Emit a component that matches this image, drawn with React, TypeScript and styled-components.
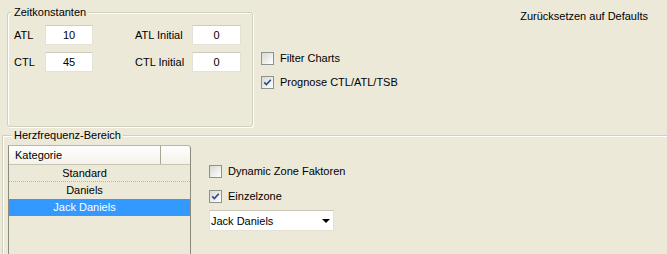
import React from 'react';
import styled, { createGlobalStyle } from 'styled-components';

const GlobalStyle = createGlobalStyle`
  html, body {
    margin: 0;
    padding: 0;
    background: #ece9d8;
  }
`;

const Window = styled.div`
  width: 667px;
  height: 254px;
  overflow: hidden;
  background: #ece9d8;
  font: 11px 'Liberation Sans', Arial, sans-serif;
  color: #000;
  display: flex;
  flex-direction: column;
`;

const TopRow = styled.div`
  display: flex;
  height: 127px;
  padding-left: 7px;
  flex-shrink: 0;
`;

const GroupBox = styled.fieldset`
  margin: 6px 0 0;
  padding: 0;
  width: 246px;
  height: 121px;
  min-width: 0;
  box-sizing: border-box;
  border: 1px solid #d0d0bf;
  border-radius: 3px;
  box-shadow: inset 1px 1px 0 #fff, 1px 1px 0 #fff;
`;

const Legend = styled.legend<{ $offset: number }>`
  margin-left: ${(p) => p.$offset}px;
  padding: 0 2px;
  height: 13px;
  line-height: 13px;
  background: #ece9d8;
`;

const FieldGrid = styled.div`
  display: grid;
  grid-template-columns: 31px 48px 99px 49px;
  grid-auto-rows: 20px;
  row-gap: 7px;
  align-items: center;
  padding: 6px 0 0 6px;
`;

const FieldLabel = styled.span<{ $indent?: number }>`
  padding-left: ${(p) => p.$indent || 0}px;
  white-space: nowrap;
`;

const TextBox = styled.input`
  width: 100%;
  height: 20px;
  box-sizing: border-box;
  margin: 0;
  padding: 0;
  border: 1px solid #e4e1d6;
  border-top-color: #cfccbf;
  background: #fff;
  font: inherit;
  color: #000;
  text-align: center;
  outline: none;
`;

const OptionList = styled.div<{ $gap: number }>`
  display: flex;
  flex-direction: column;
  gap: ${(p) => p.$gap}px;
`;

const TopOptions = styled(OptionList)`
  margin: 52px 0 0 8px;
`;

const CheckRow = styled.label`
  display: flex;
  align-items: center;
  gap: 6px;
  height: 13px;
  line-height: 13px;
  white-space: nowrap;
`;

const Box = styled.span`
  width: 13px;
  height: 13px;
  box-sizing: border-box;
  border: 1px solid #8f9090;
  background: linear-gradient(135deg, #d9d9d2 0%, #f2f2ee 65%, #fff 100%);
  display: flex;
  align-items: center;
  justify-content: center;
  flex-shrink: 0;
`;

const ResetLink = styled.span`
  margin: 10px 19px 0 auto;
  height: 13px;
  line-height: 13px;
  white-space: nowrap;
`;

const HeartGroup = styled.fieldset`
  margin: 2px 0 0 2px;
  padding: 0;
  min-width: 0;
  flex: 1;
  border: 1px solid #d0d0bf;
  border-right: none;
  border-bottom: none;
  box-shadow: inset 1px 1px 0 #fff;
`;

const GroupBody = styled.div`
  display: flex;
  padding: 3px 0 0 5px;
`;

const ListView = styled.div`
  width: 183px;
  height: 130px;
  box-sizing: border-box;
  border: 1px solid #8c8a7f;
  border-top-color: #b9b6a8;
  border-top-right-radius: 4px;
  background: #ece9d8;
  flex-shrink: 0;
  overflow: hidden;
`;

const ListHeader = styled.div`
  display: flex;
  height: 19px;
  box-sizing: border-box;
  border-bottom: 1px solid #c8c5b5;
  background: linear-gradient(#ffffff, #f4f2e8);
`;

const HeaderCell = styled.div`
  width: 152px;
  box-sizing: border-box;
  border-right: 1px solid #a9a696;
  padding-left: 6px;
  line-height: 18px;
`;

const ListRow = styled.div<{ $selected?: boolean; $dotted?: boolean }>`
  height: 17px;
  box-sizing: border-box;
  line-height: 17px;
  background: ${(p) => (p.$selected ? '#3399ff' : 'transparent')};
  color: ${(p) => (p.$selected ? '#fff' : '#000')};
  border-bottom: 1px ${(p) => (p.$dotted ? 'dotted #b8b5a6' : 'solid transparent')};
`;

const RowCell = styled.div`
  width: 151px;
  text-align: center;
  white-space: nowrap;
`;

const SidePanel = styled.div`
  display: flex;
  flex-direction: column;
  margin: 20px 0 0 18px;
`;

const Combo = styled.div`
  width: 125px;
  height: 21px;
  box-sizing: border-box;
  margin-top: 7px;
  padding: 0 3px 0 1px;
  background: #fff;
  border: 1px solid #e4e1d6;
  border-top-color: #c9c6b8;
  display: flex;
  align-items: center;
  justify-content: space-between;
`;

const DropArrow = styled.span`
  width: 0;
  height: 0;
  border-left: 4px solid transparent;
  border-right: 4px solid transparent;
  border-top: 4px solid #000;
  margin-top: 1px;
`;

const CheckBox: React.FC<{ checked?: boolean; label: string }> = ({ checked, label }) => (
  <CheckRow>
    <Box>
      {checked && (
        <svg width="9" height="9" viewBox="0 0 9 9">
          <path d="M1.2 4.3 L3.4 6.6 L7.8 1.8" fill="none" stroke="#2b4d93" strokeWidth="1.7" />
        </svg>
      )}
    </Box>
    {label}
  </CheckRow>
);

const categories = ['Standard', 'Daniels', 'Jack Daniels'];

const App: React.FC = () => {
  return (
    <Window>
      <GlobalStyle />
      <TopRow>
        <GroupBox>
          <Legend $offset={4}>Zeitkonstanten</Legend>
          <FieldGrid>
            <FieldLabel>ATL</FieldLabel>
            <TextBox readOnly value="10" />
            <FieldLabel $indent={42}>ATL Initial</FieldLabel>
            <TextBox readOnly value="0" />
            <FieldLabel>CTL</FieldLabel>
            <TextBox readOnly value="45" />
            <FieldLabel $indent={42}>CTL Initial</FieldLabel>
            <TextBox readOnly value="0" />
          </FieldGrid>
        </GroupBox>
        <TopOptions $gap={11}>
          <CheckBox label="Filter Charts" />
          <CheckBox checked label="Prognose CTL/ATL/TSB" />
        </TopOptions>
        <ResetLink>Zurücksetzen auf Defaults</ResetLink>
      </TopRow>
      <HeartGroup>
        <Legend $offset={9}>Herzfrequenz-Bereich</Legend>
        <GroupBody>
          <ListView>
            <ListHeader>
              <HeaderCell>Kategorie</HeaderCell>
            </ListHeader>
            {categories.map((c, i) => (
              <ListRow key={c} $dotted={i === 0} $selected={i === categories.length - 1}>
                <RowCell>{c}</RowCell>
              </ListRow>
            ))}
          </ListView>
          <SidePanel>
            <OptionList $gap={12}>
              <CheckBox label="Dynamic Zone Faktoren" />
              <CheckBox checked label="Einzelzone" />
            </OptionList>
            <Combo>
              Jack Daniels
              <DropArrow />
            </Combo>
          </SidePanel>
        </GroupBody>
      </HeartGroup>
    </Window>
  );
};

export default App;
